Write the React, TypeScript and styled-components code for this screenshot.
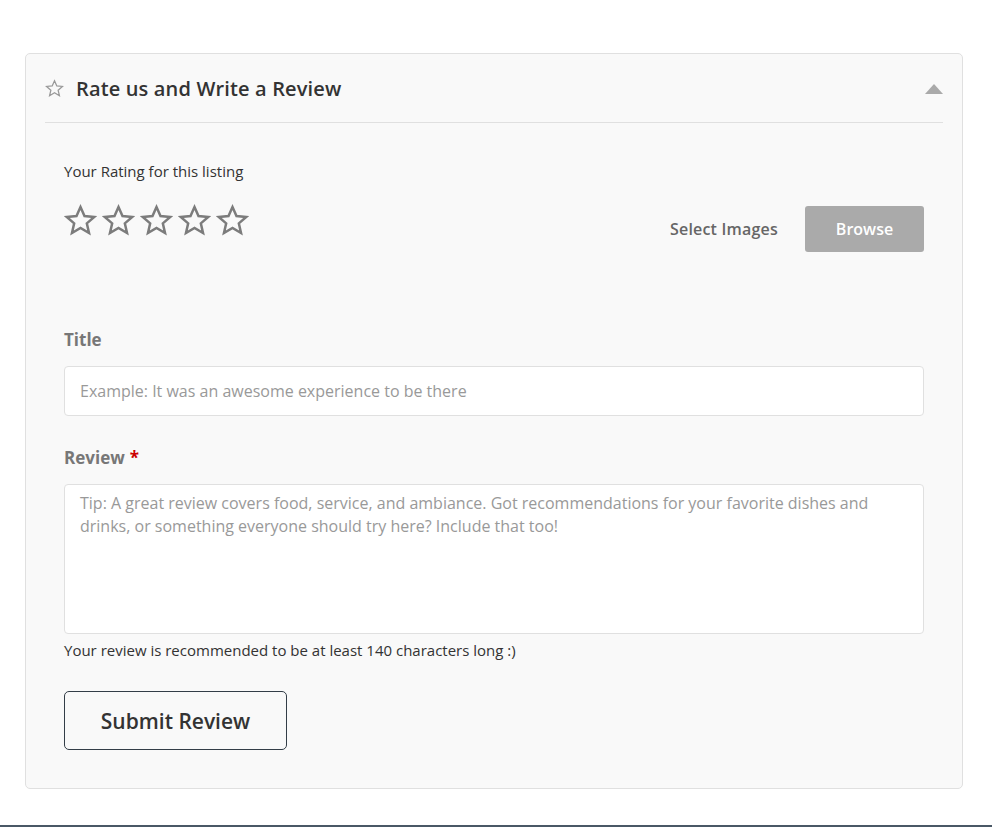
import React from "react";
import styled, { createGlobalStyle } from "styled-components";

const GlobalStyle = createGlobalStyle`
  html, body {
    margin: 0;
    padding: 0;
    background: #ffffff;
  }
  body {
    font-family: "Open Sans", "Liberation Sans", sans-serif;
  }
  * {
    box-sizing: border-box;
  }
`;

const heading = `"Open Sans", "Liberation Sans", sans-serif`;

const Page = styled.div`
  width: 992px;
  height: 827px;
  display: flex;
  flex-direction: column;
  justify-content: space-between;
  padding-top: 53px;
`;

const Card = styled.section`
  margin: 0 29px 0 25px;
  background: #f9f9f9;
  border: 1px solid #e0e0e0;
  border-radius: 5px;
  padding: 0 19px 38px 19px;
`;

const Header = styled.div`
  display: flex;
  align-items: center;
  height: 69px;
  border-bottom: 1px solid #e0e0e0;
  gap: 12px;
`;

const HeaderTitle = styled.h3`
  margin: 0;
  flex: 1;
  font-family: ${heading};
  font-weight: 600;
  font-size: 20px;
  letter-spacing: 0.15px;
  color: #333333;
`;

const Caret = styled.span`
  width: 0;
  height: 0;
  border-left: 9px solid transparent;
  border-right: 9px solid transparent;
  border-bottom: 10px solid #aaaaaa;
  margin-top: 2px;
`;

const Body = styled.div`
  padding: 38px 19px 0 19px;
`;

const RatingRow = styled.div`
  display: flex;
  justify-content: space-between;
  align-items: flex-start;
`;

const RatingCol = styled.div`
  display: flex;
  flex-direction: column;
`;

const SmallText = styled.p`
  margin: 0;
  font-size: 15px;
  color: #333333;
  line-height: 20px;
`;

const Stars = styled.div`
  display: flex;
  gap: 5px;
  margin-top: 23px;
`;

const UploadBox = styled.div`
  display: flex;
  align-items: center;
  gap: 27px;
  margin-top: 45px;
`;

const UploadLabel = styled.span`
  font-family: ${heading};
  font-size: 16px;
  font-weight: 600;
  letter-spacing: 0.2px;
  color: #666666;
`;

const BrowseButton = styled.button`
  width: 119px;
  height: 46px;
  border: none;
  border-radius: 3px;
  background: #aaaaaa;
  color: #ffffff;
  font-family: ${heading};
  font-size: 16px;
  font-weight: 600;
`;

const Field = styled.div<{ $top: number }>`
  margin-top: ${({ $top }) => $top}px;
  display: flex;
  flex-direction: column;
`;

const Label = styled.label`
  font-family: ${heading};
  font-weight: 700;
  font-size: 17px;
  color: #777777;
  line-height: 24px;
  margin-bottom: 14px;
`;

const Required = styled.span`
  color: #cc0000;
  margin-left: 5px;
`;

const TextInput = styled.input`
  height: 50px;
  border: 1px solid #e0e0e0;
  border-radius: 4px;
  background: #ffffff;
  padding: 0 15px;
  font-family: "Open Sans", sans-serif;
  font-size: 16px;
  color: #333;
  outline: none;
  &::placeholder {
    color: #999999;
  }
`;

const TextArea = styled.textarea`
  height: 150px;
  border: 1px solid #e0e0e0;
  border-radius: 4px;
  background: #ffffff;
  padding: 7px 15px;
  font-family: ${heading};
  font-size: 16px;
  line-height: 23px;
  color: #333;
  resize: none;
  outline: none;
  &::placeholder {
    color: #999999;
  }
`;

const Hint = styled(SmallText)`
  margin-top: 6px;
`;

const SubmitButton = styled.button`
  margin-top: 31px;
  width: 223px;
  height: 59px;
  border: 1px solid #333d47;
  border-radius: 5px;
  background: transparent;
  font-family: ${heading};
  font-weight: 600;
  font-size: 21px;
  color: #333333;
`;

const BottomBar = styled.div`
  height: 2px;
  background: #4a5866;
`;

function StarIcon({ size, stroke, width }: { size: number; stroke: string; width: number }) {
  return (
    <svg width={size} height={size} viewBox="0 0 24 24" fill="none">
      <path
        d="M12 2.2l2.9 6.6 7.1.6-5.4 4.7 1.6 7-6.2-3.7-6.2 3.7 1.6-7L2 9.4l7.1-.6z"
        stroke={stroke}
        strokeWidth={width}
        strokeLinejoin="miter"
      />
    </svg>
  );
}

export default function App() {
  return (
    <>
      <GlobalStyle />
      <Page>
        <Card>
          <Header>
            <StarIcon size={19} stroke="#999999" width={1.6} />
            <HeaderTitle>Rate us and Write a Review</HeaderTitle>
            <Caret />
          </Header>
          <Body>
            <RatingRow>
              <RatingCol>
                <SmallText>Your Rating for this listing</SmallText>
                <Stars>
                  {[0, 1, 2, 3, 4].map((i) => (
                    <StarIcon key={i} size={33} stroke="#7c7c7c" width={1.8} />
                  ))}
                </Stars>
              </RatingCol>
              <UploadBox>
                <UploadLabel>Select Images</UploadLabel>
                <BrowseButton>Browse</BrowseButton>
              </UploadBox>
            </RatingRow>
            <Field $top={76}>
              <Label>Title</Label>
              <TextInput placeholder="Example: It was an awesome experience to be there" />
            </Field>
            <Field $top={30}>
              <Label>
                Review<Required>*</Required>
              </Label>
              <TextArea placeholder="Tip: A great review covers food, service, and ambiance. Got recommendations for your favorite dishes and drinks, or something everyone should try here? Include that too!" />
              <Hint>Your review is recommended to be at least 140 characters long :)</Hint>
            </Field>
            <SubmitButton>Submit Review</SubmitButton>
          </Body>
        </Card>
        <BottomBar />
      </Page>
    </>
  );
}
